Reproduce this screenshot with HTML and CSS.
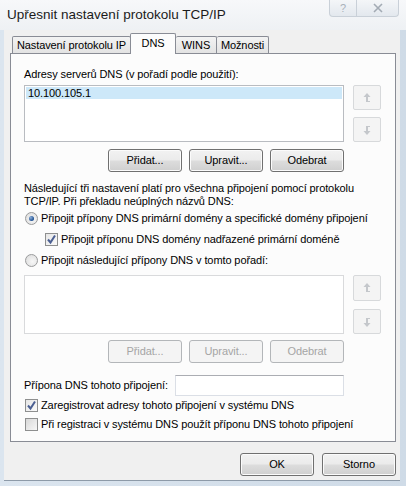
FILE: index.html
```html
<!DOCTYPE html>
<html lang="cs">

<head>
    <meta charset="UTF-8">
    <title>Upřesnit nastavení protokolu TCP/IP</title>
    <link rel="stylesheet" href="styles.css">
</head>

<body>

    <div class="window">
        <div class="title-bar">
            <span class="title">Upřesnit nastavení protokolu TCP/IP</span>
            <div class="caption-btns">
                <span class="cap-btn cap-help">?</span>
                <span class="cap-btn cap-close">
                    <svg width="12" height="10" viewBox="0 0 12 10"><path d="M2 1 L10 9 M10 1 L2 9" stroke="#a3abb4" stroke-width="1.6" fill="none"/></svg>
                </span>
            </div>
        </div>

        <div class="client">
            <div class="tabs">
                <span class="tab tab-ip">Nastavení protokolu IP</span>
                <span class="tab tab-active">DNS</span>
                <span class="tab tab-wins">WINS</span>
                <span class="tab tab-opt">Možnosti</span>
            </div>

            <div class="panel">
                <div class="label">Adresy serverů DNS (v pořadí podle použití):</div>

                <div class="list-row">
                    <div class="listbox">
                        <div class="list-item selected">10.100.105.1</div>
                    </div>
                    <div class="move-btns">
                        <span class="move-btn">
                            <svg width="12" height="12" viewBox="0 0 12 12"><path d="M6 1 L2.5 5 H5 V10 H9 V9 H7 V5 H9.5 Z" fill="#c4c7cb"/></svg>
                        </span>
                        <span class="move-btn">
                            <svg width="12" height="12" viewBox="0 0 12 12"><path d="M6 11 L2.5 7 H5 V2 H9 V3 H7 V7 H9.5 Z" fill="#c4c7cb"/></svg>
                        </span>
                    </div>
                </div>

                <div class="btn-row">
                    <span class="btn">Přidat...</span>
                    <span class="btn">Upravit...</span>
                    <span class="btn">Odebrat</span>
                </div>

                <p class="info">Následující tři nastavení platí pro všechna připojení pomocí protokolu TCP/IP. Při překladu neúplných názvů DNS:</p>

                <div class="option">
                    <span class="radio checked"></span>
                    <span>Připojit přípony DNS primární domény a specifické domény připojení</span>
                </div>
                <div class="option indent">
                    <span class="check checked">
                        <svg width="11" height="11" viewBox="0 0 11 11"><path d="M2 5.5 L4.5 8.5 L9 1.5" stroke="#4b5f92" stroke-width="2" fill="none"/></svg>
                    </span>
                    <span>Připojit příponu DNS domény nadřazené primární doméně</span>
                </div>
                <div class="option">
                    <span class="radio"></span>
                    <span>Připojit následující přípony DNS v tomto pořadí:</span>
                </div>

                <div class="list-row list-row-2">
                    <div class="listbox disabled"></div>
                    <div class="move-btns">
                        <span class="move-btn">
                            <svg width="12" height="12" viewBox="0 0 12 12"><path d="M6 1 L2.5 5 H5 V10 H9 V9 H7 V5 H9.5 Z" fill="#c4c7cb"/></svg>
                        </span>
                        <span class="move-btn">
                            <svg width="12" height="12" viewBox="0 0 12 12"><path d="M6 11 L2.5 7 H5 V2 H9 V3 H7 V7 H9.5 Z" fill="#c4c7cb"/></svg>
                        </span>
                    </div>
                </div>

                <div class="btn-row btn-row-2">
                    <span class="btn btn-disabled">Přidat...</span>
                    <span class="btn btn-disabled">Upravit...</span>
                    <span class="btn btn-disabled">Odebrat</span>
                </div>

                <div class="suffix-row">
                    <span>Přípona DNS tohoto připojení:</span>
                    <span class="textbox"></span>
                </div>

                <div class="option option-small">
                    <span class="check checked">
                        <svg width="11" height="11" viewBox="0 0 11 11"><path d="M2 5.5 L4.5 8.5 L9 1.5" stroke="#4b5f92" stroke-width="2" fill="none"/></svg>
                    </span>
                    <span>Zaregistrovat adresy tohoto připojení v systému DNS</span>
                </div>
                <div class="option option-small">
                    <span class="check"></span>
                    <span>Při registraci v systému DNS použít příponu DNS tohoto připojení</span>
                </div>
            </div>

            <div class="dialog-btns">
                <span class="btn">OK</span>
                <span class="btn">Storno</span>
            </div>
        </div>
    </div>

</body>

</html>
```

FILE: styles.css
```css
body {
    margin: 0;
    background-color: #fff;
    font-family: "Liberation Sans", Arial, sans-serif;
    font-size: 11px;
    letter-spacing: -0.1px;
    color: #000;
}

p {
    margin: 0;
    padding: 0;
}

.window {
    width: 406px;
    height: 486px;
    background: linear-gradient(to right, #dbe5ef, #cfdbe7);
    overflow: hidden;
}

/* 标题栏 */

.title-bar {
    display: flex;
    height: 30px;
    background: linear-gradient(#f7f8fa, #eef1f4);
}

.title {
    padding-left: 7px;
    line-height: 30px;
    font-size: 13.5px;
    letter-spacing: 0;
    color: #1b1b1b;
}

.caption-btns {
    display: flex;
    margin-left: auto;
    margin-right: 7px;
}

.cap-btn {
    display: flex;
    align-items: center;
    justify-content: center;
    height: 16px;
    border: 1px solid #c9d0d8;
    border-top: 0;
    background: linear-gradient(#f4f6f8, #e3e8ee);
    color: #a9b1ba;
    font-size: 11px;
}

.cap-help {
    width: 26px;
    border-radius: 0 0 0 4px;
}

.cap-close {
    width: 41px;
    border-left: 0;
    border-radius: 0 0 4px 0;
}

/* 客户区 */

.client {
    height: 451px;
    margin: 0 6px 0 4px;
    padding: 3px 4px 0 6px;
    box-sizing: border-box;
    background-color: #f0f0f0;
    border-bottom: 1px solid #8d9aa8;
}

.tabs {
    display: flex;
    align-items: flex-end;
    height: 20px;
    padding-left: 2px;
}

.tab {
    flex-shrink: 0;
    height: 17px;
    line-height: 16px;
    box-sizing: border-box;
    text-align: center;
    white-space: nowrap;
    border: 1px solid #898c95;
    border-bottom: 0;
    border-radius: 2px 2px 0 0;
    background: linear-gradient(#f3f3f3, #e3e3e3);
}

.tab-ip {
    width: 119px;
}

.tab-wins {
    width: 41px;
    border-left: 0;
}

.tab-opt {
    width: 52px;
    border-left: 0;
}

.tab-active {
    position: relative;
    z-index: 1;
    width: 46px;
    height: 21px;
    line-height: 18px;
    margin: 0 0 -1px -1px;
    background: #fcfcfc;
}

.panel {
    height: 389px;
    box-sizing: border-box;
    padding: 14px 0 0 13px;
    border: 1px solid #898c95;
    background-color: #fcfcfc;
    line-height: 13px;
}

.list-row {
    display: grid;
    grid-template-columns: 320px 28px;
    column-gap: 9px;
    margin-top: 4px;
}

.listbox {
    height: 57px;
    box-sizing: border-box;
    padding: 1px;
    border: 1px solid #b9bcc1;
    background-color: #fff;
}

.listbox.disabled {
    height: 59px;
    border-color: #d9dadc;
}

.list-item {
    height: 12px;
    line-height: 12px;
    padding-left: 2px;
}

.list-item.selected {
    background-color: #cde8f9;
}

.move-btns {
    display: flex;
    flex-direction: column;
    gap: 7px;
}

.move-btn {
    display: flex;
    align-items: center;
    justify-content: center;
    height: 25px;
    box-sizing: border-box;
    border: 1px solid #d7d9db;
    border-radius: 2px;
    background-color: #f4f4f4;
}

.list-row-2 .move-btns {
    gap: 8px;
}

.list-row-2 .move-btn:first-child {
    height: 26px;
}

.btn-row {
    display: flex;
    justify-content: flex-end;
    gap: 7px;
    width: 320px;
    margin-top: 7px;
}

.btn-row-2 {
    margin-top: 6px;
}

.btn {
    display: block;
    width: 74px;
    height: 23px;
    line-height: 21px;
    box-sizing: border-box;
    text-align: center;
    border: 1px solid #707070;
    border-radius: 3px;
    background: linear-gradient(#f2f2f2 0%, #ebebeb 48%, #dddddd 52%, #cfcfcf 100%);
    box-shadow: inset 0 0 0 1px #fbfbfb;
    color: #000;
}

.btn-disabled {
    border-color: #b3b6b9;
    background: #f4f4f4;
    box-shadow: none;
    color: #a5a5a5;
}

.info {
    margin-top: 10px;
    width: 350px;
}

.option {
    display: flex;
    align-items: center;
    height: 21px;
}

.option.indent {
    padding-left: 20px;
}

.option-small {
    height: 19px;
}

.radio,
.check {
    display: flex;
    align-items: center;
    justify-content: center;
    flex-shrink: 0;
    width: 13px;
    height: 13px;
    box-sizing: border-box;
    margin: 0 3px 0 1px;
    border: 1px solid #8e8f8f;
    background: linear-gradient(135deg, #d8d8d8, #f7f7f7);
}

.radio {
    border-radius: 50%;
    border-color: #9a9b9c;
    background: radial-gradient(circle at 60% 60%, #f7f7f7, #dadada);
}

.radio.checked::after {
    content: "";
    width: 5px;
    height: 5px;
    border-radius: 50%;
    background: radial-gradient(circle at 35% 35%, #8fb2dd, #1c4d8e 70%);
}

.check.checked {
    background: linear-gradient(135deg, #e6e6e6, #fafafa);
}

.suffix-row {
    display: grid;
    grid-template-columns: 151px 169px;
    align-items: center;
    margin-top: 12px;
}

.textbox {
    display: block;
    height: 21px;
    box-sizing: border-box;
    border: 1px solid #dbdfe6;
    border-top-color: #abadb3;
    background-color: #fff;
}

.dialog-btns {
    display: flex;
    justify-content: flex-end;
    gap: 8px;
    margin-top: 11px;
}
```
